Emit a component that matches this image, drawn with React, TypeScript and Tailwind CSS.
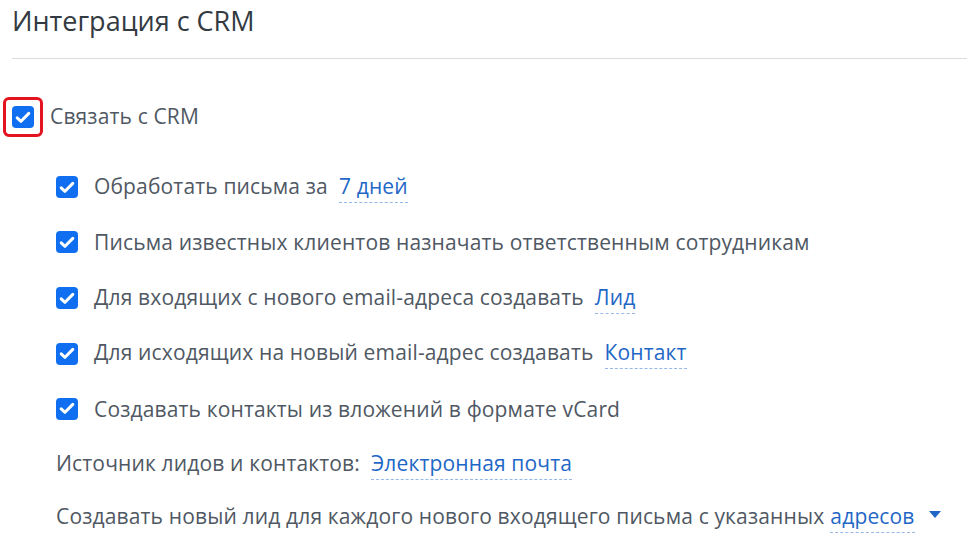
import React from "react";

function Check() {
  return (
    <span className="flex h-[22px] w-[22px] shrink-0 items-center justify-center rounded-[4px] bg-[#0f6ff0]">
      <svg width="16" height="13" viewBox="0 0 16 13" fill="none">
        <path d="M2.2 6.8 L6 10.3 L13.8 2.4" stroke="white" strokeWidth={3} strokeLinecap="round" strokeLinejoin="round" />
      </svg>
    </span>
  );
}

function Link({ children }: { children: React.ReactNode }) {
  return (
    <span className="inline-block border-b border-dashed border-[#94b8e8] pb-[2px] text-[#1f67c6]">
      {children}
    </span>
  );
}

const subRows: { text: string; link?: string; h: string }[] = [
  { text: "Обработать письма за", link: "7 дней", h: "h-[54px]" },
  { text: "Письма известных клиентов назначать ответственным сотрудникам", h: "h-[56px]" },
  { text: "Для входящих с нового email-адреса создавать", link: "Лид", h: "h-[56px]" },
  { text: "Для исходящих на новый email-адрес создавать", link: "Контакт", h: "h-[55px]" },
  { text: "Создавать контакты из вложений в формате vCard", h: "h-[55px]" },
];

export default function App() {
  return (
    <div
      className="min-h-[549px] bg-white pl-3 text-[#4f5863] tracking-[0.15px]"
      style={{ fontFamily: '"Open Sans", "Noto Sans", sans-serif' }}
    >
      <div className="pt-[3px] text-[27px] leading-[36px] tracking-normal text-[#333a42]">Интеграция с CRM</div>
      <div className="mt-[19px] h-px bg-[#dcdcdc]" />

      <div className="mt-[38px] flex h-[40px] items-center">
        <span className="-ml-[9px] flex h-[40px] w-[40px] items-center justify-center rounded-[6px] border-[3px] border-[#e3141f]">
          <Check />
        </span>
        <span className="ml-[7px] text-[21px]">Связать с CRM</span>
      </div>

      <div className="mt-[23px] pl-[44px]">
        {subRows.map((r) => (
          <div key={r.text} className={`flex ${r.h} items-center text-[21px] leading-[28px]`}>
            <Check />
            <span className="ml-[16px]">
              {r.text}
              {r.link && <span className="ml-[11px]"><Link>{r.link}</Link></span>}
            </span>
          </div>
        ))}

        <div className="mt-[1px] flex h-[55px] items-center text-[21px] leading-[28px]">
          <span>
            Источник лидов и контактов:
            <span className="ml-[11px]"><Link>Электронная почта</Link></span>
          </span>
        </div>
        <div className="flex h-[50px] items-center text-[21px] leading-[28px]">
          <span>
            Создавать новый лид для каждого нового входящего письма с указанных
            <span className="ml-[6px]"><Link>адресов</Link></span>
          </span>
          <svg className="ml-[14px] mb-[4px]" width="12" height="8" viewBox="0 0 12 8">
            <path d="M0 0 H12 L6 7 Z" fill="#1f67c6" />
          </svg>
        </div>
      </div>
    </div>
  );
}
